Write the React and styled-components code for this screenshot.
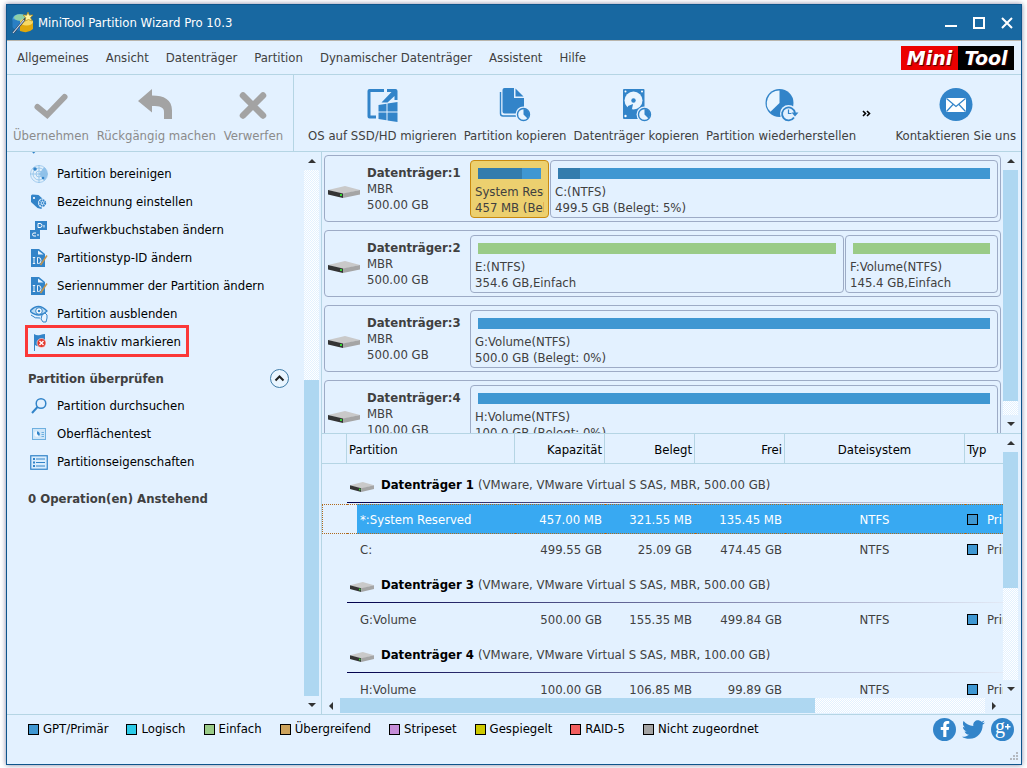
import React from "react";
import styled, { createGlobalStyle, css } from "styled-components";
import { FaTwitter, FaFacebookF } from "react-icons/fa";

const c = {
  bg: "#e3f1ff",
  title: "#1868a1",
  frame: "#0e558c",
  line: "#b5d5e4",
  box: "#9dabc6",
  text: "#404040",
  icon: "#3284c9",
  blue: "#3f97d2",
  blueUsed: "#337cad",
  green: "#9acb87",
  thumb: "#aed7f1",
  select: "#38a9f2",
};

const GlobalStyle = createGlobalStyle`
  *, *::before, *::after { box-sizing: border-box; }
  body {
    margin: 0;
    background: #fff;
    color: ${c.text};
    font: 13px/16px "DejaVu Sans Condensed", "Noto Sans", sans-serif;
  }
  button { font: inherit; color: inherit; background: none; border: 0; padding: 0; }
  h2, ul { margin: 0; padding: 0; list-style: none; }
  svg { display: block; flex: none; }
`;

const Desktop = styled.div`
  height: 100vh;
  padding: 4px 5px 3px 6px;
`;
const Window = styled.div`
  height: 100%;
  display: flex;
  flex-direction: column;
  background: ${c.bg};
  border: 1px solid ${c.frame};
  box-shadow: 0 0 5px rgba(50, 50, 100, 0.6);
`;
const TitleBar = styled.header`
  flex: none;
  height: 36px;
  display: flex;
  align-items: center;
  gap: 4px;
  padding: 0 8px 0 5px;
  background: ${c.title};
  border-bottom: 1px solid #b9b5ac;
  color: #fff;
`;
const WindowTitle = styled.span`
  flex: 1;
`;
const WindowControls = styled.div`
  display: flex;
  gap: 16px;
  svg { width: 12px; height: 12px; }
`;
const MenuBar = styled.nav`
  flex: none;
  height: 34px;
  display: flex;
  align-items: center;
  gap: 17px;
  padding: 1px 7px 0 10px;
  border-bottom: 1px solid ${c.line};
`;
const MenuButton = styled.button`
  white-space: nowrap;
`;
const Brand = styled.div`
  margin-left: auto;
  display: flex;
  font: italic bold 19px/24px "DejaVu Sans", sans-serif;
  color: #fff;
  text-shadow: 1px 1px 1px #400;
`;
const BrandHalf = styled.span`
  width: ${(p) => (p.$dark ? 56 : 57)}px;
  text-align: center;
  background: ${(p) => (p.$dark ? "#000" : "#ec0000")};
`;
const ToolBar = styled.div`
  flex: none;
  height: 77px;
  display: flex;
  border-bottom: 1px solid ${c.line};
`;
const ToolGroup = styled.div`
  display: flex;
  gap: ${(p) => (p.$divided ? 8 : 7)}px;
  padding: 0 ${(p) => (p.$divided ? 10 : 0)}px 0 ${(p) => (p.$divided ? 6 : 14)}px;
  border-right: ${(p) => (p.$divided ? `1px solid ${c.line}` : "0")};
`;
const ToolButton = styled.button`
  display: flex;
  flex-direction: column;
  align-items: center;
  gap: 5px;
  padding-top: 12px;
  white-space: nowrap;
  &:disabled { color: #8b8b8b; }
  svg { width: 36px; height: 36px; }
`;
const MoreButton = styled.button`
  margin-left: 6px;
  color: #000;
`;
const ContactArea = styled.div`
  margin-left: auto;
  padding-right: 5px;
  display: flex;
`;
const Main = styled.main`
  flex: 1;
  min-height: 0;
  display: flex;
`;
const SidePanel = styled.aside`
  flex: none;
  width: 315px;
  display: flex;
  padding-right: 2px;
  border-right: 1px solid ${c.line};
`;
const SideContent = styled.div`
  flex: 1;
  min-width: 0;
  overflow: hidden;
  padding: 0 15px 0 21px;
`;
const ActionList = styled.ul`
  padding-left: 2px;
  color: #000;
`;
const ScrolledAction = styled.li`
  height: 8px;
  overflow: hidden;
  svg { margin: -15px 0 0 1px; width: 18px; height: 18px; }
`;
const ActionButton = styled.button`
  position: relative;
  height: 28px;
  display: flex;
  align-items: center;
  gap: 9px;
  white-space: nowrap;
  svg { width: 18px; height: 18px; }
  ${(p) =>
    p.$marked &&
    css`
      &::after {
        content: "";
        position: absolute;
        inset: -3px -8px -1px -5px;
        border: 3px solid #fb3838;
      }
    `}
`;
const SectionHeader = styled.div`
  height: 36px;
  padding-top: 9px;
  display: flex;
  align-items: center;
  justify-content: space-between;
`;
const SectionTitle = styled.h2`
  font-size: 13px;
  line-height: 16px;
`;
const PendingTitle = styled(SectionTitle)`
  padding-top: 15px;
`;
const RightPanel = styled.div`
  flex: 1;
  min-width: 0;
  display: grid;
  grid-template-rows: minmax(0, 1fr) minmax(0, 1fr);
`;
const MapPane = styled.section`
  min-width: 0;
  display: flex;
  padding-right: 3px;
`;
const DiskList = styled.div`
  flex: 1;
  min-width: 0;
  overflow: hidden;
  display: flex;
  flex-direction: column;
  gap: 8px;
  padding: 3px 2px 0 2px;
`;
const DiskCard = styled.article`
  flex: none;
  height: 67px;
  display: flex;
  align-items: center;
  padding: 0 2px 0 3px;
  border: 1px solid ${c.box};
  border-radius: 4px;
  > svg { margin-top: 6px; }
`;
const DiskLabel = styled.div`
  flex: none;
  width: 103px;
  margin-left: 7px;
  white-space: nowrap;
`;
const Partitions = styled.div`
  flex: 1;
  min-width: 0;
  display: grid;
  grid-template-columns: ${(p) => p.$columns};
  gap: 1px;
`;
const PartitionBox = styled.div`
  height: 58px;
  padding: 7px 4px 0;
  overflow: hidden;
  white-space: nowrap;
  border: 1px solid ${(p) => (p.$active ? "#c98a10" : c.box)};
  border-radius: 4px;
  background: ${(p) => (p.$active ? "#ecd06f" : "none")};
`;
const UsageBar = styled.div`
  height: 11px;
  margin: 0 3px 5px;
  background: ${(p) => p.$color};
`;
const UsageFill = styled.div`
  height: 100%;
  background: ${c.blueUsed};
`;
const PartitionText = styled.div`
  overflow: hidden;
`;
const TablePane = styled.section`
  min-width: 0;
  display: flex;
  flex-direction: column;
  border-top: 1px solid ${c.line};
  padding: 0 3px 1px 0;
`;
const TableRow = styled.div`
  flex: 1;
  min-height: 0;
  display: flex;
`;
const TableView = styled.div`
  flex: 1;
  min-width: 0;
  overflow: hidden;
`;
const Table = styled.table`
  width: 100%;
  table-layout: fixed;
  border-spacing: 0;
  white-space: nowrap;
`;
const Col = styled.col`
  width: ${(p) => (p.$w ? `${p.$w}px` : "auto")};
`;
const HeadCell = styled.th`
  height: 30px;
  padding: 2px 2px 0;
  font-weight: normal;
  color: #000;
  text-align: ${(p) => p.$align || "left"};
  border-bottom: 1px solid ${c.line};
  border-right: ${(p) => (p.$last ? "0" : `1px solid ${c.line}`)};
`;
const GroupCell = styled.td`
  height: 40px;
  padding: 0;
  vertical-align: top;
`;
const GroupLabel = styled.div`
  height: 39px;
  display: flex;
  align-items: center;
  gap: 4px;
  padding: 4px 0 0 3px;
  border-bottom: 1px solid;
  border-image: linear-gradient(90deg, #00004c, #8a8fb4 60%, #e3eaf6) 1;
  strong { color: #000; margin-left: 3px; }
  svg { margin-top: 4px; }
`;
const Cell = styled.td`
  height: 30px;
  padding: 1px 3px 0 2px;
  overflow: hidden;
  text-align: ${(p) => p.$align || "left"};
`;
const NameCell = styled(Cell)`
  padding-left: 13px;
`;
const DataRow = styled.tr`
  ${(p) =>
    p.$selected &&
    css`
      color: #fff;
      td {
        background: ${c.select};
        border: 1px dotted #b06a1c;
        border-width: 1px 0;
      }
      td:first-child { background: none; border-left-width: 1px; }
      td:nth-child(2) {
        background: linear-gradient(90deg, ${c.bg} 10px, ${c.select} 10px);
      }
    `}
`;
const TypeCell = styled.div`
  display: flex;
  align-items: center;
  gap: 9px;
`;
const Swatch = styled.i`
  flex: none;
  width: 11px;
  height: 11px;
  border: 1px solid #000;
  background: ${(p) => p.$color};
`;
const ScrollBar = styled.div`
  flex: none;
  display: flex;
  flex-direction: ${(p) => (p.$horizontal ? "row" : "column")};
  ${(p) => (p.$horizontal ? "height: 15px; margin-right: 15px;" : "width: 15px;")}
`;
const ScrollArrow = styled.button`
  flex: none;
  display: flex;
  align-items: center;
  justify-content: center;
  ${(p) => (p.$horizontal ? "width: 18px; height: 15px;" : "height: 18px; width: 15px;")}
`;
const Track = styled.div`
  flex: ${(p) => p.$share} 1 0;
  background: repeating-conic-gradient(#fff 0 25%, ${c.bg} 0 50%) 0 0 / 2px 2px;
`;
const Thumb = styled.div`
  flex: ${(p) => p.$share} 1 0;
  background: ${c.thumb};
`;
const Footer = styled.footer`
  flex: none;
  height: 50px;
  display: flex;
  justify-content: space-between;
  align-items: flex-start;
  padding: 0 7px 0 21px;
  border-top: 1px solid ${c.line};
`;
const Legend = styled.ul`
  height: 28px;
  display: flex;
  align-items: center;
  gap: 18px;
  color: #000;
`;
const LegendItem = styled.li`
  display: flex;
  align-items: center;
  gap: 4px;
  white-space: nowrap;
`;
const FooterEnd = styled.div`
  display: flex;
  flex-direction: column;
  align-items: flex-end;
`;
const Social = styled.div`
  height: 28px;
  display: flex;
  align-items: center;
  gap: 6px;
`;
const SocialLink = styled.a`
  width: 23px;
  height: 23px;
  display: flex;
  align-items: center;
  justify-content: center;
  border-radius: 50%;
  background: ${(p) => (p.$disc ? c.icon : "none")};
  color: ${(p) => (p.$disc ? "#fff" : c.icon)};
`;
const Grip = styled.div`
  margin: 9px -5px 0 0;
`;

/* ---------- drawings ---------- */
const AppIcon = () => (
  <svg width="22" height="22" viewBox="0 0 22 22">
    <ellipse cx="8" cy="7" rx="7.5" ry="5" fill="#4da3e0" />
    <path d="M.5 7v8c1 2.500 5 4 8 3.500V9z" fill="#2a7fc4" />
    <ellipse cx="8" cy="5.500" rx="6" ry="3.200" fill="#8fd0a8" />
    <path d="M8 9q6-4 13 0v8q-5 5-13 2z" fill="#e0a80c" />
    <ellipse cx="14.500" cy="10" rx="6.500" ry="3.500" fill="#f7d964" />
    <path d="M1 21L14 6" stroke="#33425c" strokeWidth="2.200" />
    <path d="M1 21L12 8" stroke="#cfe3f5" strokeWidth="1.100" />
    <path d="M16 0l1.300 3.200L21 3l-2.500 2.600L20 9l-3.500-1.500L13 9l.800-3.500L11 3l3.700.2z" fill="#fff3a0" stroke="#b58a10" strokeWidth=".7" />
  </svg>
);
const DiskIcon = ({ w = 32, h = 12 }) => (
  <svg width={w} height={h} viewBox="0 0 32 12" preserveAspectRatio="none">
    <path d="M0 4L17 0l15 4-17 4z" fill="#c9c9c9" />
    <path d="M0 4l15 3.500V12L0 8.500z" fill="#343434" />
    <path d="M15 7.500L32 4v4.500L15 12z" fill="#a5a5a5" />
    <rect x="12" y="8" width="2" height="2" fill="#35d435" />
  </svg>
);
const CheckIcon = () => (
  <svg viewBox="0 0 36 36" fill="none" stroke="#a3a3a3" strokeWidth="6">
    <path d="M4.500 20l9.700 8L31.500 10" strokeLinecap="round" />
  </svg>
);
const UndoIcon = () => (
  <svg viewBox="0 0 36 36">
    <path d="M0 14L14 2v6.500c12 0 20 4 20 15V32h-8v-7c0-5-4-6-12-6v6.500z" fill="#a3a3a3" />
  </svg>
);
const CrossIcon = () => (
  <svg viewBox="0 0 36 36">
    <path d="M8 8.500L28 28.500M28 8.500L8 28.500" stroke="#a3a3a3" strokeWidth="6.500" strokeLinecap="round" />
  </svg>
);
const MigrateIcon = () => (
  <svg viewBox="0 0 36 36" fill={c.icon}>
    <path d="M3.500 4q0-2 2-2H20v3H6.500v23.500H12v3H5.500q-2 0-2-2z" />
    <path d="M23 2h8.500q2 0 2 2v9h-3V9l-7 6.500h-6L27.500 5H23z" />
    <path d="M14.500 18l8-1.200v7.700h-8zM23.500 16.600l10-1.600v9.500h-10zM14.500 25.500h8v7.700l-8-1.200zM23.500 25.500h10V35l-10-1.600z" />
  </svg>
);
const PieBadge = () => (
  <g>
    <circle cx="26.500" cy="27.500" r="8" fill={c.bg} />
    <circle cx="26.500" cy="27.500" r="6" fill="#eaf5ff" stroke={c.icon} strokeWidth="1.400" />
    <path d="M26.500 27.500V22a5.500 5.500 0 0 1 4 9.400z" fill={c.icon} />
  </g>
);
const CopyPartitionIcon = () => (
  <svg viewBox="0 0 36 36" fill={c.icon}>
    <path d="M5.500 3q0-2 2-2H17v10h10v14.500q0 1-1 1H7.500q-2 0-2-2z" />
    <path d="M18.500 1.500l8 8h-8z" />
    <path d="M3.500 5v21.500q0 2.500 2.500 2.500h14" fill="none" stroke={c.icon} strokeWidth="1.400" />
    <PieBadge />
  </svg>
);
const CopyDiskIcon = () => (
  <svg viewBox="0 0 36 36" fill={c.icon}>
    <rect x="5" y="2" width="21.500" height="30" rx="1" />
    <circle cx="15.500" cy="13.500" r="9" fill="#eaf5ff" />
    <circle cx="15.500" cy="13.500" r="2.200" />
    <path d="M9 24l1-5 5-2-1 5-4 3z" />
    <g fill="#fff">
      <circle cx="7.500" cy="4.500" r="1" />
      <circle cx="24" cy="4.500" r="1" />
      <circle cx="7.500" cy="29" r="1.200" />
    </g>
    <PieBadge />
  </svg>
);
const RestoreIcon = () => (
  <svg viewBox="0 0 36 36">
    <circle cx="16.500" cy="16" r="14" fill={c.icon} />
    <path d="M16.500 16V3.500a12.500 12.500 0 0 0-9 21.300z" fill="#e9f5ff" />
    <circle cx="25.500" cy="26.500" r="8.500" fill={c.bg} />
    <path d="M31 30.500a6.500 6.500 0 1 1 1-4.500" fill="none" stroke={c.icon} strokeWidth="1.800" />
    <path d="M28.500 25.500h7L32 29.500z" fill={c.icon} />
    <path d="M25.500 22.500v4h3" fill="none" stroke={c.icon} strokeWidth="1.200" />
  </svg>
);
const MailIcon = () => (
  <svg viewBox="0 0 36 36">
    <circle cx="18" cy="17.500" r="16.500" fill={c.icon} />
    <rect x="8" y="11" width="20" height="14" rx="1" fill="#fff" />
    <path d="M8.500 11.500l9.500 8 9.500-8M8.500 24.500l6.500-7M27.500 24.500l-6.500-7" fill="none" stroke={c.icon} strokeWidth="1.200" />
  </svg>
);
const RadarIcon = () => (
  <svg viewBox="0 0 18 18">
    <circle cx="9" cy="9" r="8.500" fill="#e3f0fb" stroke="#a5cdee" />
    <path d="M9 9L14 2.300A8.500 8.500 0 0 1 14 15.700z" fill="#7db7e6" opacity=".8" />
    <g fill="none" stroke="#8dc0e8" strokeWidth=".8">
      <circle cx="9" cy="9" r="6" />
      <circle cx="9" cy="9" r="3" />
      <path d="M9 0v18M0 9h18" />
    </g>
    <circle cx="5" cy="4" r="1.800" fill={c.icon} />
    <circle cx="13" cy="13" r="1.300" fill={c.icon} />
  </svg>
);
const TagIcon = () => (
  <svg viewBox="0 0 18 18">
    <path d="M1 3q0-1.500 1.500-1.500l6 .5 5.500 5-2.500 9-4-1L1 9z" fill={c.icon} />
    <circle cx="4" cy="5" r="1.100" fill="#fff" />
    <circle cx="12.500" cy="10" r="4.500" fill={c.bg} />
    <circle cx="12.500" cy="10" r="2.700" fill="none" stroke={c.icon} strokeWidth="2" strokeDasharray="1.600 .5" />
    <circle cx="12.500" cy="10" r="1" fill={c.icon} />
  </svg>
);
const LettersIcon = () => (
  <svg viewBox="0 0 18 18">
    <path d="M5 0h12v9H5zM0 9h10v9H0z" fill={c.icon} />
    <path d="M8 2.500h2q2 0 2 2t-2 2H8zM14 4v2.500M6 12H4q-1.500 0-1.500 1.500T4 15h2M8 13v2" fill="none" stroke="#fff" />
  </svg>
);
const IdIcon = () => (
  <svg viewBox="0 0 18 18">
    <path d="M1 0h8l6 5v13H1z" fill={c.icon} />
    <path d="M8 1.500v4h5.500z" fill="#e8f4ff" />
    <path d="M4 8.500v6M2.800 8.500h2.400M2.800 14.500h2.400M7.500 8.500v6h1q2.500 0 2.500-3t-2.500-3h-1" fill="none" stroke="#fff" strokeWidth=".9" />
    <path d="M17 6.500L10.500 16" stroke="#c7954b" strokeWidth="1.500" />
  </svg>
);
const EyeIcon = () => (
  <svg viewBox="0 0 18 18">
    <path d="M0 6q8.500-9 17 0-8.500 8-17 0z" fill="#b9daf4" stroke={c.icon} strokeWidth="1.300" />
    <circle cx="9" cy="6" r="3.300" fill="#fff" stroke={c.icon} />
    <circle cx="9" cy="6" r="1.300" fill={c.icon} />
    <path d="M1 10q4 4 9 3" fill="none" stroke={c.icon} />
    <path d="M12 10l3-2 2 2v3l-1 4h-3l-2-3z" fill="#e8f4ff" stroke={c.icon} />
  </svg>
);
const FlagIcon = () => (
  <svg viewBox="0 0 18 18">
    <path d="M4 1q3 2 6 1t5-1v11q-3 0-5 1t-5-1v6H4z" fill={c.icon} />
    <circle cx="11.500" cy="10" r="4.500" fill="#e2382e" stroke="#fff" strokeWidth=".6" />
    <path d="M9.500 8l4 4M13.500 8l-4 4" stroke="#fff" strokeWidth="1.400" />
  </svg>
);
const SearchIcon = () => (
  <svg viewBox="0 0 18 18" fill="none" stroke={c.icon}>
    <circle cx="11" cy="6.500" r="4.800" strokeWidth="1.500" />
    <path d="M7.500 10L2 16" strokeWidth="2" />
  </svg>
);
const SurfaceIcon = () => (
  <svg viewBox="0 0 18 18">
    <rect x="2.500" y="3.500" width="13" height="11" fill="#cfe6f8" stroke="#6fb0e0" />
    <circle cx="7" cy="9" r="2.800" fill="#f0f8ff" />
    <path d="M7 9V6.200a2.800 2.800 0 0 1 2 4.800z" fill={c.icon} />
    <path d="M11.500 7.500h2.500M11.500 9.500h2.500M11.500 11.500h2.500" stroke="#6fb0e0" />
  </svg>
);
const ListIcon = () => (
  <svg viewBox="0 0 18 18">
    <rect x=".75" y="2.750" width="16.500" height="13.500" fill="#d9edfd" stroke={c.icon} strokeWidth="1.200" />
    <path d="M3 6h2M3 9.500h2M3 13h2" stroke={c.icon} strokeWidth="1.800" />
    <path d="M6 6h9M6 9.500h9M6 13h9" stroke={c.icon} />
  </svg>
);
const CollapseIcon = () => (
  <svg width="19" height="19" viewBox="0 0 19 19" fill="none">
    <circle cx="9.500" cy="9.500" r="9" fill="#e9f5ff" stroke="#3f7ba6" />
    <path d="M5.500 11.500l4-4 4 4" stroke="#202020" strokeWidth="2" />
  </svg>
);
const GooglePlusIcon = () => (
  <svg width="23" height="23" viewBox="0 0 23 23" fill="#fff">
    <text x="4" y="15" fontFamily="Liberation Serif, serif" fontSize="20">g</text>
    <path d="M16 6h1.500v2H19.500v1.500h-2v2H16v-2h-2V8h2z" />
  </svg>
);

const arrowPaths = {
  up: "M1 7l4-4 4 4z",
  down: "M1 3h8L5 7z",
  left: "M7 1v8L3 5z",
  right: "M3 1l4 4-4 4z",
};
const Arrow = ({ dir }) => (
  <svg width="10" height="10" viewBox="0 0 10 10">
    <path d={arrowPaths[dir]} fill="#333" />
  </svg>
);

function Scroller({ horizontal, before = 0, thumb, after = 0 }) {
  return (
    <ScrollBar $horizontal={horizontal}>
      <ScrollArrow $horizontal={horizontal} aria-label={horizontal ? "Nach links" : "Nach oben"}>
        <Arrow dir={horizontal ? "left" : "up"} />
      </ScrollArrow>
      {before > 0 && <Track $share={before} />}
      <Thumb $share={thumb} />
      {after > 0 && <Track $share={after} />}
      <ScrollArrow $horizontal={horizontal} aria-label={horizontal ? "Nach rechts" : "Nach unten"}>
        <Arrow dir={horizontal ? "right" : "down"} />
      </ScrollArrow>
    </ScrollBar>
  );
}

/* ---------- data ---------- */
const menus = ["Allgemeines", "Ansicht", "Datenträger", "Partition", "Dynamischer Datenträger", "Assistent", "Hilfe"];
const pendingTools = [
  ["Übernehmen", CheckIcon],
  ["Rückgängig machen", UndoIcon],
  ["Verwerfen", CrossIcon],
];
const tools = [
  ["OS auf SSD/HD migrieren", MigrateIcon],
  ["Partition kopieren", CopyPartitionIcon],
  ["Datenträger kopieren", CopyDiskIcon],
  ["Partition wiederherstellen", RestoreIcon],
];
const actions = [
  ["Partition bereinigen", RadarIcon],
  ["Bezeichnung einstellen", TagIcon],
  ["Laufwerkbuchstaben ändern", LettersIcon],
  ["Partitionstyp-ID ändern", IdIcon],
  ["Seriennummer der Partition ändern", IdIcon],
  ["Partition ausblenden", EyeIcon],
  ["Als inaktiv markieren", FlagIcon, true],
];
const checks = [
  ["Partition durchsuchen", SearchIcon],
  ["Oberflächentest", SurfaceIcon],
  ["Partitionseigenschaften", ListIcon],
];
const disks = [
  {
    n: 1,
    size: "500.00 GB",
    parts: [
      { name: "System Reserved", info: "457 MB (Belegt: 70%)", share: 79, used: 70, active: true },
      { name: "C:(NTFS)", info: "499.5 GB (Belegt: 5%)", share: 448, used: 5 },
    ],
  },
  {
    n: 2,
    size: "500.00 GB",
    parts: [
      { name: "E:(NTFS)", info: "354.6 GB,Einfach", share: 374, color: c.green },
      { name: "F:Volume(NTFS)", info: "145.4 GB,Einfach", share: 153, color: c.green },
    ],
  },
  { n: 3, size: "500.00 GB", parts: [{ name: "G:Volume(NTFS)", info: "500.0 GB (Belegt: 0%)", share: 1 }] },
  { n: 4, size: "100.00 GB", parts: [{ name: "H:Volume(NTFS)", info: "100.0 GB (Belegt: 0%)", share: 1 }] },
];
const groups = [
  {
    n: 1,
    size: "500.00 GB",
    rows: [
      ["*:System Reserved", "457.00 MB", "321.55 MB", "135.45 MB"],
      ["C:", "499.55 GB", "25.09 GB", "474.45 GB"],
    ],
  },
  { n: 3, size: "500.00 GB", rows: [["G:Volume", "500.00 GB", "155.35 MB", "499.84 GB"]] },
  { n: 4, size: "100.00 GB", rows: [["H:Volume", "100.00 GB", "106.85 MB", "99.89 GB"]] },
];
const legend = [
  ["GPT/Primär", c.blue],
  ["Logisch", "#2ccbe8"],
  ["Einfach", c.green],
  ["Übergreifend", "#cda35c"],
  ["Stripeset", "#c58dd8"],
  ["Gespiegelt", "#cdc900"],
  ["RAID-5", "#f25e5e"],
  ["Nicht zugeordnet", "#a3a3a3"],
];

function ActionItem({ label, Icon, marked }) {
  return (
    <li>
      <ActionButton $marked={marked}>
        <Icon />
        {label}
      </ActionButton>
    </li>
  );
}

function Disk({ disk }) {
  const columns = disk.parts.map((p) => `minmax(0, ${p.share}fr)`).join(" ");
  return (
    <DiskCard>
      <DiskIcon />
      <DiskLabel>
        <strong>Datenträger:{disk.n}</strong>
        <div>MBR</div>
        <div>{disk.size}</div>
      </DiskLabel>
      <Partitions $columns={columns}>
        {disk.parts.map((p) => (
          <PartitionBox key={p.name} $active={p.active}>
            <UsageBar $color={p.color || c.blue}>
              {p.used && <UsageFill style={{ width: `${p.used}%` }} />}
            </UsageBar>
            <PartitionText>{p.name}</PartitionText>
            <PartitionText>{p.info}</PartitionText>
          </PartitionBox>
        ))}
      </Partitions>
    </DiskCard>
  );
}

function PartitionTable() {
  return (
    <Table>
      <colgroup>
        <Col $w={25} />
        <Col $w={168} />
        <Col $w={90} />
        <Col $w={90} />
        <Col $w={90} />
        <Col />
        <Col $w={38} />
      </colgroup>
      <thead>
        <tr>
          <HeadCell />
          <HeadCell>Partition</HeadCell>
          <HeadCell $align="right">Kapazität</HeadCell>
          <HeadCell $align="right">Belegt</HeadCell>
          <HeadCell $align="right">Frei</HeadCell>
          <HeadCell $align="center">Dateisystem</HeadCell>
          <HeadCell $last>Typ</HeadCell>
        </tr>
      </thead>
      <tbody>
        {groups.map((g) => (
          <React.Fragment key={g.n}>
            <tr>
              <td />
              <GroupCell colSpan={6}>
                <GroupLabel>
                  <DiskIcon w={24} h={10} />
                  <strong>Datenträger {g.n}</strong>
                  <span>(VMware, VMware Virtual S SAS, MBR, {g.size})</span>
                </GroupLabel>
              </GroupCell>
            </tr>
            {g.rows.map((r) => (
              <DataRow key={r[0]} $selected={r[0].startsWith("*")}>
                <Cell />
                <NameCell>{r[0]}</NameCell>
                <Cell $align="right">{r[1]}</Cell>
                <Cell $align="right">{r[2]}</Cell>
                <Cell $align="right">{r[3]}</Cell>
                <Cell $align="center">NTFS</Cell>
                <Cell>
                  <TypeCell>
                    <Swatch $color={c.blue} />
                    Primär
                  </TypeCell>
                </Cell>
              </DataRow>
            ))}
          </React.Fragment>
        ))}
      </tbody>
    </Table>
  );
}

export default function App() {
  return (
    <Desktop>
      <GlobalStyle />
      <Window>
        <TitleBar>
          <AppIcon />
          <WindowTitle>MiniTool Partition Wizard Pro 10.3</WindowTitle>
          <WindowControls>
            <button aria-label="Minimieren">
              <svg viewBox="0 0 12 12"><path d="M0 9h12" stroke="#fff" strokeWidth="2" /></svg>
            </button>
            <button aria-label="Maximieren">
              <svg viewBox="0 0 12 12"><path d="M1 1h10v10H1z" fill="none" stroke="#fff" strokeWidth="2" /></svg>
            </button>
            <button aria-label="Schließen">
              <svg viewBox="0 0 12 12"><path d="M1 1l10 10M11 1L1 11" stroke="#fff" strokeWidth="2" /></svg>
            </button>
          </WindowControls>
        </TitleBar>
        <MenuBar>
          {menus.map((m) => (
            <MenuButton key={m}>{m}</MenuButton>
          ))}
          <Brand>
            <BrandHalf>Mini</BrandHalf>
            <BrandHalf $dark>Tool</BrandHalf>
          </Brand>
        </MenuBar>
        <ToolBar>
          <ToolGroup $divided>
            {pendingTools.map(([label, Icon]) => (
              <ToolButton key={label} disabled>
                <Icon />
                {label}
              </ToolButton>
            ))}
          </ToolGroup>
          <ToolGroup>
            {tools.map(([label, Icon]) => (
              <ToolButton key={label}>
                <Icon />
                {label}
              </ToolButton>
            ))}
          </ToolGroup>
          <MoreButton aria-label="Weitere Werkzeuge">
            <svg width="9" height="7" viewBox="0 0 9 7" fill="none" stroke="#000" strokeWidth="1.600">
              <path d="M1 1l2.500 2.500L1 6M5 1l2.500 2.500L5 6" />
            </svg>
          </MoreButton>
          <ContactArea>
            <ToolButton>
              <MailIcon />
              Kontaktieren Sie uns
            </ToolButton>
          </ContactArea>
        </ToolBar>
        <Main>
          <SidePanel>
            <SideContent>
              <ActionList>
                <ScrolledAction aria-hidden="true">
                  <SearchIcon />
                </ScrolledAction>
                {actions.map(([label, Icon, marked]) => (
                  <ActionItem key={label} label={label} Icon={Icon} marked={marked} />
                ))}
              </ActionList>
              <SectionHeader>
                <SectionTitle>Partition überprüfen</SectionTitle>
                <button aria-label="Einklappen">
                  <CollapseIcon />
                </button>
              </SectionHeader>
              <ActionList>
                {checks.map(([label, Icon]) => (
                  <ActionItem key={label} label={label} Icon={Icon} />
                ))}
              </ActionList>
              <PendingTitle>0 Operation(en) Anstehend</PendingTitle>
            </SideContent>
            <Scroller before={210} thumb={316} />
          </SidePanel>
          <RightPanel>
            <MapPane>
              <DiskList>
                {disks.map((d) => (
                  <Disk key={d.n} disk={d} />
                ))}
              </DiskList>
              <Scroller thumb={231} after={14} />
            </MapPane>
            <TablePane>
              <TableRow>
                <TableView>
                  <PartitionTable />
                </TableView>
                <Scroller thumb={136} after={92} />
              </TableRow>
              <Scroller horizontal thumb={475} after={170} />
            </TablePane>
          </RightPanel>
        </Main>
        <Footer>
          <Legend>
            {legend.map(([label, color]) => (
              <LegendItem key={label}>
                <Swatch $color={color} />
                {label}
              </LegendItem>
            ))}
          </Legend>
          <FooterEnd>
            <Social>
              <SocialLink href="#facebook" aria-label="Facebook" $disc>
                <FaFacebookF size={16} />
              </SocialLink>
              <SocialLink href="#twitter" aria-label="Twitter">
                <FaTwitter size={23} />
              </SocialLink>
              <SocialLink href="#googleplus" aria-label="Google+" $disc>
                <GooglePlusIcon />
              </SocialLink>
            </Social>
            <Grip>
              <svg width="9" height="9" viewBox="0 0 9 9" fill="#b4b9c0">
                <path d="M6 0h2v2H6zM3 3h2v2H3zM6 3h2v2H6zM0 6h2v2H0zM3 6h2v2H3zM6 6h2v2H6z" />
              </svg>
            </Grip>
          </FooterEnd>
        </Footer>
      </Window>
    </Desktop>
  );
}
